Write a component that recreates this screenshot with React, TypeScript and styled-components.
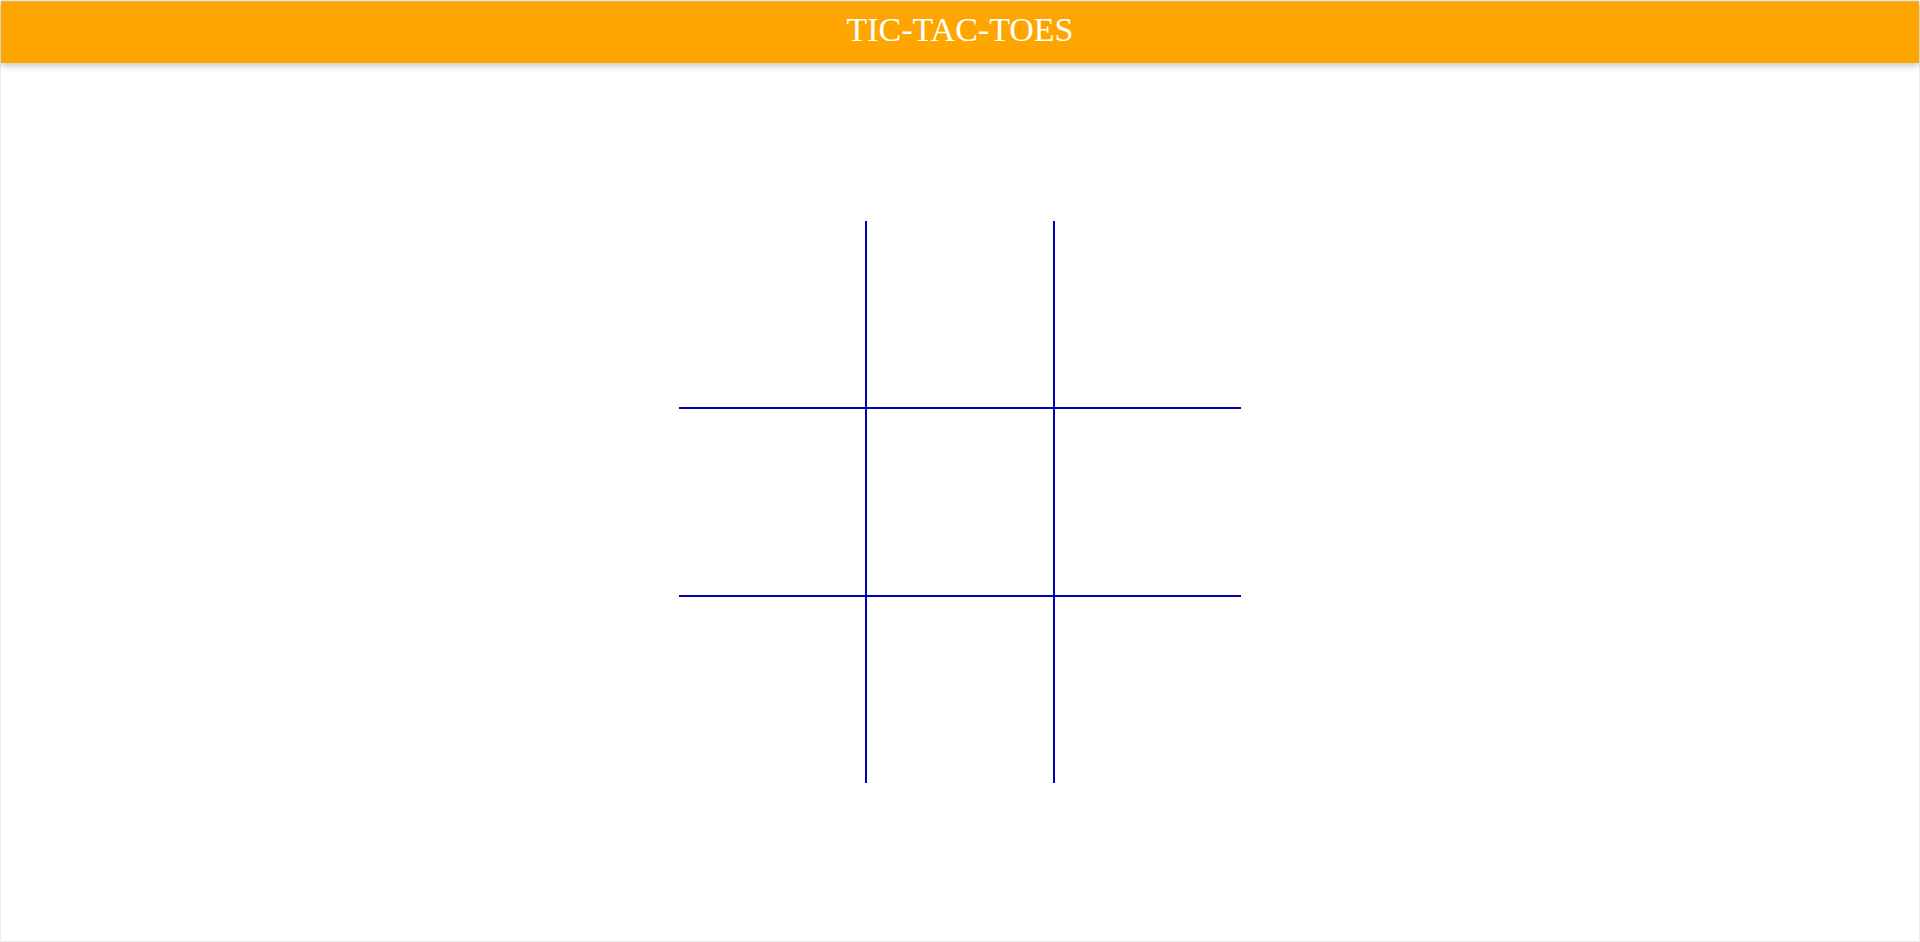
import React from "react";
import styled, { createGlobalStyle } from "styled-components";

const Global = createGlobalStyle`
  html, body { margin: 0; padding: 0; background: #fff; }
  * { box-sizing: border-box; }
`;

const Page = styled.div`
  height: 942px;
  display: flex;
  flex-direction: column;
  border: 1px solid #ececec;
  font-family: "Liberation Serif", "Times New Roman", serif;
`;

const Header = styled.header`
  height: 62px;
  flex: 0 0 62px;
  background: #ffa500;
  border-top: 1px solid #f4b23a;
  box-shadow: 0 3px 6px rgba(0, 0, 0, 0.22);
  display: flex;
  align-items: center;
  justify-content: center;
  color: #fff;
  position: relative;
  z-index: 1;
`;

const Title = styled.h1`
  margin: 0;
  font-size: 34px;
  font-weight: normal;
  line-height: 1;
  padding-bottom: 5px;
`;

const Main = styled.main`
  flex: 1;
  display: flex;
  align-items: center;
  justify-content: center;
`;

const Board = styled.div`
  display: grid;
  grid-template-columns: repeat(3, 187.33px);
  grid-template-rows: repeat(3, 187.33px);
  width: 562px;
  height: 562px;
`;

const Cell = styled.div<{ $right: boolean; $bottom: boolean }>`
  border-right: ${(p) => (p.$right ? "2px solid #0000b4" : "none")};
  border-bottom: ${(p) => (p.$bottom ? "2px solid #0000b4" : "none")};
  margin-right: ${(p) => (p.$right ? "-1px" : "0")};
  margin-bottom: ${(p) => (p.$bottom ? "-1px" : "0")};
`;

export default function App() {
  const cells = Array.from({ length: 9 }, (_, i) => i);
  return (
    <>
      <Global />
      <Page>
        <Header>
          <Title>TIC-TAC-TOES</Title>
        </Header>
        <Main>
          <Board>
            {cells.map((i) => (
              <Cell key={i} $right={i % 3 !== 2} $bottom={i < 6} />
            ))}
          </Board>
        </Main>
      </Page>
    </>
  );
}
